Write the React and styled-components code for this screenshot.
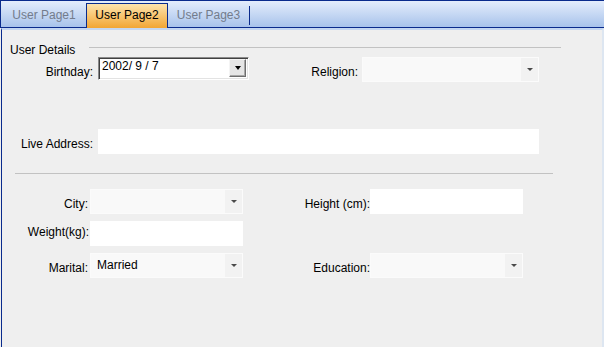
import React from 'react'
import styled, { createGlobalStyle } from 'styled-components';

const GlobalStyle = createGlobalStyle`
  html, body {
    margin: 0;
    padding: 0;
    background: #efefef;
  }
  body {
    font-family: "Liberation Sans", Arial, sans-serif;
    font-size: 12px;
    color: #000;
  }
`;

const tabs = ['User Page1', 'User Page2', 'User Page3'];
const tabWidths = [84, 82, 81];

const ComboBox = ({ value, width }) => (
  <Combo width={width}>
    <ComboText>{value}</ComboText>
    <ComboButton>
      <Arrow color="#4a4a4a" w={6} h={3} />
    </ComboButton>
  </Combo>
);

const App = () => {
  const active = 1;

  return (
    <Window>
      <GlobalStyle />
      <TabStrip>
        {tabs.map((t, i) => (
          <Tab key={t} active={i === active} width={tabWidths[i]}>
            {t}
          </Tab>
        ))}
        <TabSep />
      </TabStrip>
      <Panel>
        <SectionHeader>
          <SectionTitle>User Details</SectionTitle>
          <SectionLine />
        </SectionHeader>

        <Row>
          <Label width={83} top={8}>Birthday:</Label>
          <DateBox>
            <DateText>2002/ 9 / 7</DateText>
            <DateButton>
              <Arrow color="#000" w={7} h={4} />
            </DateButton>
          </DateBox>
          <Label width={109} top={8}>Religion:</Label>
          <Spacer w={4} />
          <ComboBox width={177} />
        </Row>

        <Row gapTop={47}>
          <Label width={83} top={8}>Live Address:</Label>
          <Spacer w={5} />
          <TextField width={441} />
        </Row>

        <Separator />

        <Row gapTop={15}>
          <Label width={78} top={8}>City:</Label>
          <Spacer w={2} />
          <ComboBox width={153} />
          <Label width={127} top={8}>Height (cm):</Label>
          <TextField width={153} />
        </Row>

        <Row gapTop={7}>
          <Label width={79} top={4}>Weight(kg):</Label>
          <Spacer w={1} />
          <TextField width={153} />
        </Row>

        <Row gapTop={7}>
          <Label width={78} top={8}>Marital:</Label>
          <Spacer w={2} />
          <ComboBox width={153} value="Married" />
          <Label width={127} top={8}>Education:</Label>
          <ComboBox width={153} />
        </Row>
      </Panel>
    </Window>
  )
}

export default App

const Window = styled.div`
  width: 604px;
  height: 347px;
  display: flex;
  flex-direction: column;
  overflow: hidden;
`;

const TabStrip = styled.div`
  height: 26px;
  display: flex;
  align-items: flex-end;
  padding-left: 1px;
  border-top: 1px solid #0a2b8c;
  border-bottom: 1px solid #0a2b8c;
  border-left: 1px solid #0a2b8c;
  background: linear-gradient(#e4edfc, #a8c3eb);
`;

const Tab = styled.div`
  box-sizing: border-box;
  width: ${p => p.width}px;
  height: ${p => (p.active ? 25 : 24)}px;
  margin-bottom: ${p => (p.active ? -1 : 0)}px;
  padding-top: ${p => (p.active ? 4 : 5)}px;
  line-height: 14px;
  text-align: center;
  color: ${p => (p.active ? '#000' : '#737c8c')};
  background: ${p => (p.active ? 'linear-gradient(#fde3ad, #f2a634)' : 'transparent')};
  border: ${p => (p.active ? '1px solid #0a2b8c' : 'none')};
  border-bottom: none;
`;

const TabSep = styled.div`
  width: 1px;
  height: 19px;
  margin-bottom: 2px;
  background: #0a2b8c;
`;

const Panel = styled.div`
  flex: 1;
  margin-left: 1px;
  padding: 13px 0 0 8px;
  border-top: 2px solid #c5d7f1;
  border-left: 1px solid #0a2b8c;
  border-right: 2px solid #dde6f1;
  background: #efefef;
`;

const SectionHeader = styled.div`
  display: flex;
  align-items: flex-start;
  width: 551px;
  height: 14px;
  line-height: 14px;
`;

const SectionTitle = styled.div`
  width: 79px;
`;

const SectionLine = styled.div`
  flex: 1;
  margin-top: 4px;
  border-top: 1px solid #c2c2c2;
`;

const Row = styled.div`
  display: flex;
  align-items: flex-start;
  margin-top: ${p => p.gapTop || 0}px;
`;

const Label = styled.div`
  width: ${p => p.width}px;
  margin-top: ${p => p.top}px;
  line-height: 14px;
  text-align: right;
  white-space: nowrap;
`;

const Spacer = styled.div`
  width: ${p => p.w}px;
  flex-shrink: 0;
`;

const DateBox = styled.div`
  box-sizing: border-box;
  display: flex;
  justify-content: space-between;
  width: 151px;
  height: 23px;
  margin-left: 5px;
  background: #fff;
  border: 1px solid;
  border-color: #8a8a8a #fff #fff #8a8a8a;
  box-shadow: inset 1px 1px 0 #404040, inset -1px -1px 0 #e3e3e3;
  padding: 1px 2px 2px 3px;
`;

const DateText = styled.div`
  line-height: 14px;
  margin-top: 0;
`;

const DateButton = styled.div`
  box-sizing: border-box;
  width: 17px;
  height: 18px;
  display: flex;
  align-items: center;
  justify-content: center;
  background: #e6e6e6;
  border: 1px solid;
  border-color: #f4f4f4 #6e6e6e #6e6e6e #f4f4f4;
  box-shadow: inset -1px -1px 0 #a8a8a8;
`;

const Arrow = styled.div`
  width: 0;
  height: 0;
  border-left: ${p => p.w / 2}px solid transparent;
  border-right: ${p => p.w / 2}px solid transparent;
  border-top: ${p => p.h}px solid ${p => p.color};
`;

const Combo = styled.div`
  box-sizing: border-box;
  display: flex;
  width: ${p => p.width}px;
  height: 25px;
  background: #f9f9f9;
  border: 1px solid #fbfbfb;
`;

const ComboText = styled.div`
  flex: 1;
  padding: 4px 0 0 6px;
  line-height: 14px;
`;

const ComboButton = styled.div`
  width: 17px;
  display: flex;
  align-items: center;
  justify-content: center;
  background: #f2f2f2;
`;

const TextField = styled.div`
  width: ${p => p.width}px;
  height: 25px;
  background: #fff;
`;

const Separator = styled.div`
  width: 538px;
  margin: 19px 0 0 5px;
  border-top: 1px solid #c2c2c2;
`;
